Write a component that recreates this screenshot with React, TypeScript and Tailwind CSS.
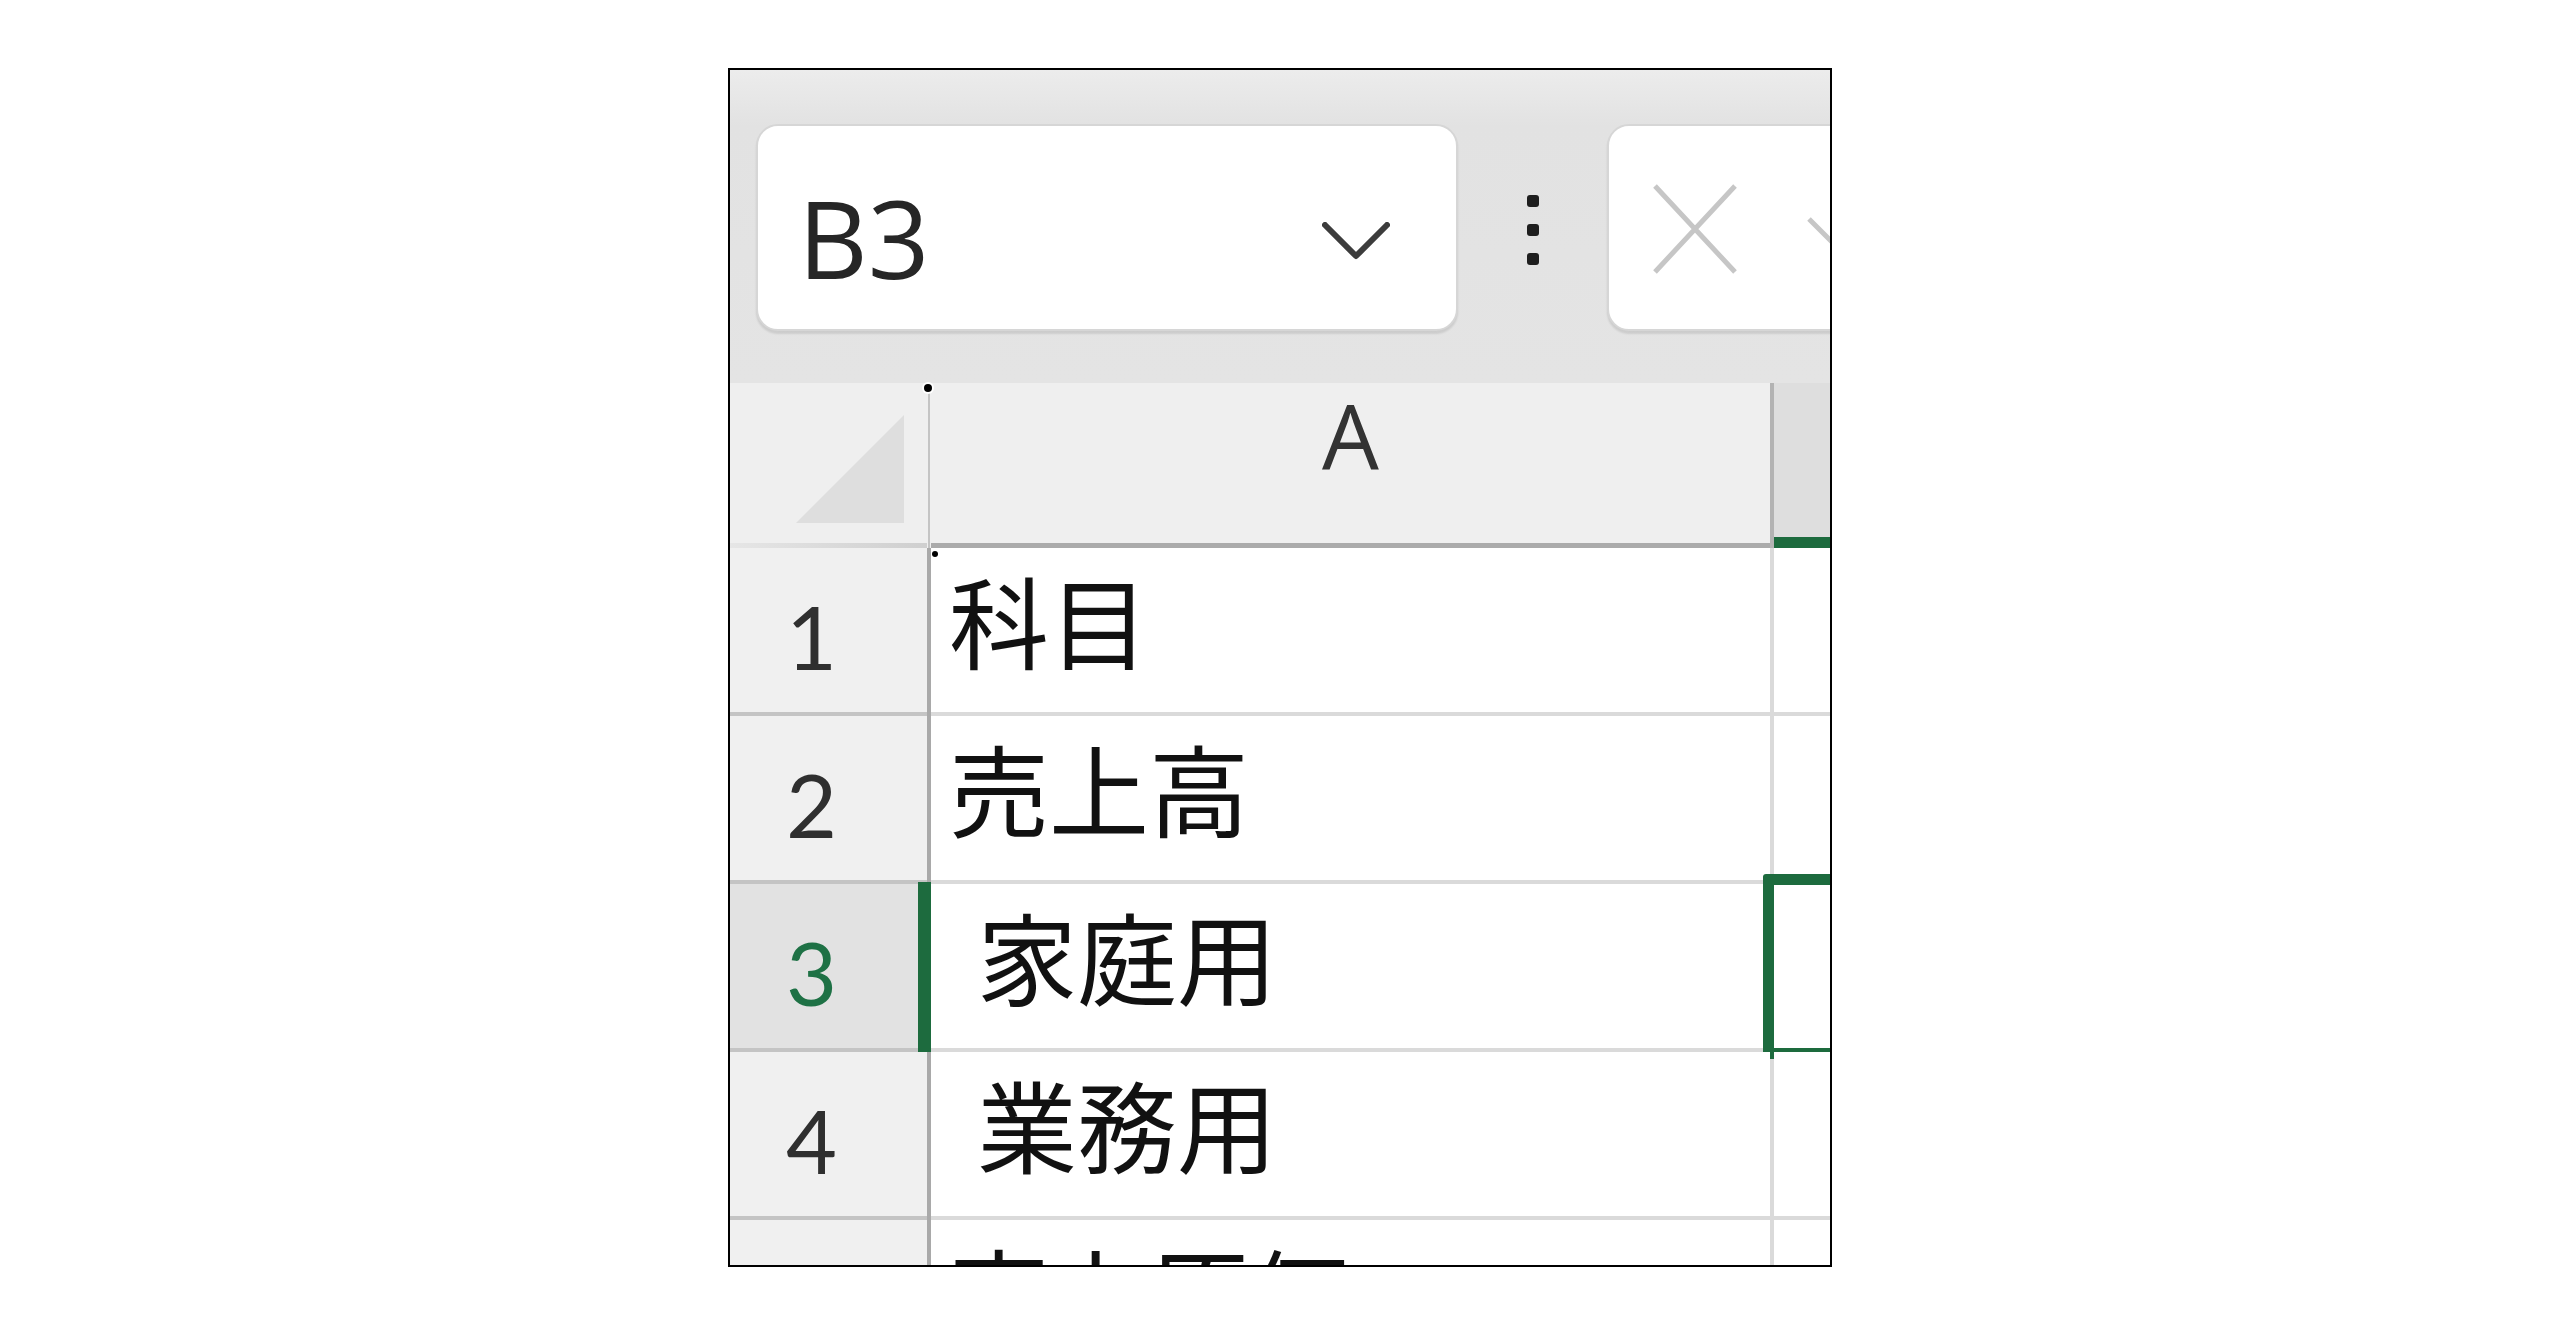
import React from "react";

type Row = { n: string; text: string; indent?: boolean; sel?: boolean };

const rows: Row[] = [
  { n: "1", text: "科目" },
  { n: "2", text: "売上高" },
  { n: "3", text: "家庭用", indent: true, sel: true },
  { n: "4", text: "業務用", indent: true },
  { n: "", text: "売上原価" },
];

function NameBox() {
  return (
    <div className="w-[702px] h-[207px] shrink-0 rounded-[22px] bg-white border-2 border-[#d6d6d6] shadow-[0_3px_2px_rgba(0,0,0,0.10)] flex items-center justify-between pl-[40px] pr-[66px]">
      <span className="pt-[20px] text-[108px] leading-none text-[#262626] font-['Open_Sans',sans-serif]">
        B3
      </span>
      <svg width="68" height="38" viewBox="0 0 68 38" className="mt-[26px]">
        <path d="M3 3 L34 34 L65 3" fill="none" stroke="#3c3c3c" strokeWidth="6" strokeLinecap="round" strokeLinejoin="round" />
      </svg>
    </div>
  );
}

function Dots() {
  return (
    <div className="w-[149px] shrink-0 flex justify-center">
      <div className="mt-[71px] flex flex-col gap-[17px]">
        <div className="w-[12px] h-[12px] rounded-[3px] bg-[#1e1e1e]" />
        <div className="w-[12px] h-[12px] rounded-[3px] bg-[#1e1e1e]" />
        <div className="w-[12px] h-[12px] rounded-[3px] bg-[#1e1e1e]" />
      </div>
    </div>
  );
}

function FormulaBox() {
  return (
    <div className="w-[400px] h-[207px] shrink-0 rounded-[22px] bg-white border-2 border-[#d6d6d6] shadow-[0_3px_2px_rgba(0,0,0,0.10)] flex items-start pl-[44px] pt-[58px] gap-[70px]">
      <svg width="84" height="90" viewBox="0 0 84 90">
        <path d="M2 2 L82 88 M82 2 L2 88" fill="none" stroke="#c6c6c6" strokeWidth="5" />
      </svg>
      <svg width="110" height="90" viewBox="0 0 110 90">
        <path d="M2 35 L42 75 L105 5" fill="none" stroke="#c6c6c6" strokeWidth="5" />
      </svg>
    </div>
  );
}

function HeaderRow() {
  return (
    <div className="flex h-[165px] shrink-0">
      {/* corner */}
      <div className="w-[197px] shrink-0 flex flex-col">
        <div className="flex-1 bg-[#efefef] flex items-end justify-end pr-[23px] pb-[20px]">
          <svg width="108" height="108" viewBox="0 0 108 108">
            <path d="M108 0 L108 108 L0 108 Z" fill="#dedede" />
          </svg>
        </div>
        <div className="h-[5px] bg-[linear-gradient(to_right,#e6e6e6,#cfcfcf)]" />
      </div>
      {/* divider */}
      <div className="relative w-[4px] shrink-0 bg-[#efefef] flex justify-center">
        <div className="w-[2px] h-full bg-[#c4c4c4]" />
        <div className="absolute top-[1px] left-[-3px] w-[8px] h-[8px] rounded-full bg-black ring-2 ring-white" />
      </div>
      {/* column A */}
      <div className="w-[839px] shrink-0 flex flex-col">
        <div className="flex-1 bg-[#efefef] flex justify-center items-start pt-[6px]">
          <span className="text-[90px] leading-none text-[#333333] font-['Open_Sans',sans-serif]">A</span>
        </div>
        <div className="h-[5px] bg-[#ababab]" />
      </div>
      <div className="w-[4px] shrink-0 bg-[#b3b3b3]" />
      {/* column B */}
      <div className="w-[200px] shrink-0 flex flex-col">
        <div className="flex-1 bg-[#dedede]" />
        <div className="h-[11px] bg-[#1d6b3e]" />
      </div>
    </div>
  );
}

function DataRow({ row, first }: { row: Row; first?: boolean }) {
  return (
    <div className="flex h-[168px] shrink-0">
      {/* row header */}
      <div className="w-[197px] shrink-0 flex flex-col">
        <div
          className={
            "flex-1 flex items-center justify-center pt-[12px] pr-[34px] " +
            (row.sel ? "bg-[#e2e2e2]" : "bg-[#f0f0f0]")
          }
        >
          {row.n && (
            <span
              className={
                "text-[88px] leading-none font-['Lato',sans-serif] " +
                (row.sel ? "text-[#1e7145]" : "text-[#2f2f2f]")
              }
            >
              {row.n}
            </span>
          )}
        </div>
        <div className="h-[4px] bg-[#c4c4c4]" />
      </div>
      {row.sel ? (
        <div className="relative w-[4px] shrink-0 bg-[#a9a9a9]">
          <div className="absolute right-0 top-[-2px] bottom-0 w-[13px] bg-[#1d6b3e]" />
        </div>
      ) : (
        <div className="w-[4px] shrink-0 bg-[#a9a9a9]" />
      )}
      {/* column A cell */}
      <div className="relative w-[839px] shrink-0 flex flex-col bg-white">
        {first && (
          <div className="absolute top-[3px] left-[1px] w-[6px] h-[6px] rounded-full bg-black" />
        )}
        <div
          className={
            "flex-1 flex items-center pb-[22px] " + (row.indent ? "pl-[46px]" : "pl-[18px]")
          }
        >
          <span className="text-[100px] leading-none text-[#111111] font-['Noto_Sans_CJK_JP',sans-serif] whitespace-nowrap">
            {row.text}
          </span>
        </div>
        <div className="h-[4px] bg-[#dadada]" />
      </div>
      <div className="w-[4px] shrink-0 bg-[#dadada]" />
      {/* column B cell */}
      <div className="relative w-[200px] shrink-0 flex flex-col bg-white">
        <div className="flex-1" />
        <div className="h-[4px] bg-[#dadada]" />
        {row.sel && (
          <div className="absolute left-[-11px] top-[-10px] w-[300px] h-[185px] border-[11px] border-[#1d6b3e] rounded-[3px]" />
        )}
      </div>
    </div>
  );
}

export default function App() {
  return (
    <div className="w-[2560px] h-[1335px] bg-white pl-[728px] pt-[68px]">
      <div className="w-[1104px] h-[1199px] border-2 border-black overflow-hidden flex flex-col bg-[#e4e4e4]">
        <div className="h-[313px] shrink-0 flex pl-[26px] pt-[54px] bg-[linear-gradient(to_bottom,#ececec,#e2e2e2_56px,#e4e4e4)]">
          <NameBox />
          <Dots />
          <FormulaBox />
        </div>
        <HeaderRow />
        {rows.map((r, i) => (
          <DataRow key={i} row={r} first={i === 0} />
        ))}
      </div>
    </div>
  );
}
